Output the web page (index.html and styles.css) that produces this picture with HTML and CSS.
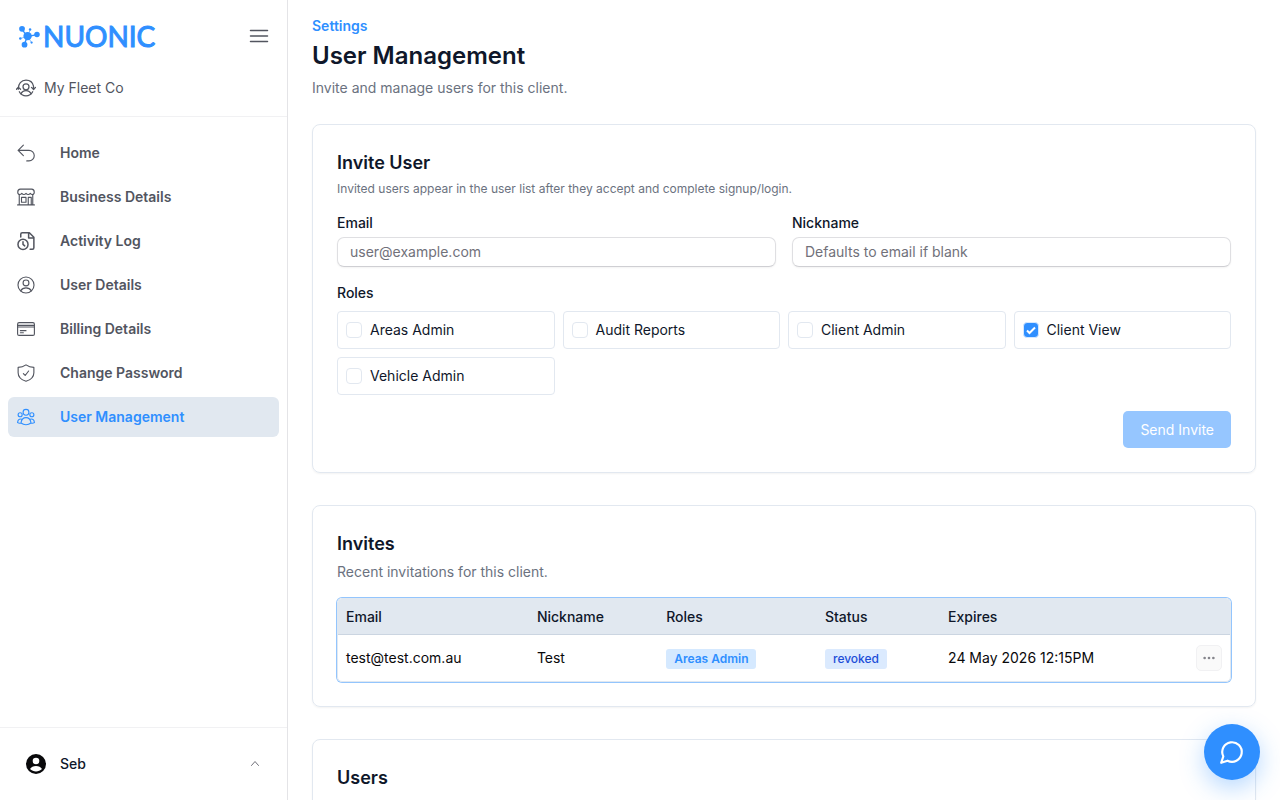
FILE: index.html
```html
<!DOCTYPE html>
<html lang="en">
<head>
    <meta charset="UTF-8">
    <meta name="viewport" content="width=device-width, initial-scale=1.0">
    <title>User Management</title>
    <link rel="stylesheet" href="styles.css">
</head>
<body>
    <aside class="sidebar">
        <div class="sidebar-header">
            <div class="brand-row">
                <a class="brand" href="#">
                    <svg class="brand-mark" viewBox="0 0 24 24" aria-hidden="true">
                        <path d="M4 4.500 10 12 20 10M10 12 6.500 20" fill="none" stroke="currentColor" stroke-width="1.400"/>
                        <path d="M10 12 12.500 5.500M10 12l4 6M10 12l-7.500 2" fill="none" stroke="currentColor" stroke-width=".6"/>
                        <circle cx="4.200" cy="4" r="3"/>
                        <circle cx="10" cy="11.600" r="4.400"/>
                        <circle cx="19.800" cy="10" r="2.900"/>
                        <circle cx="6.800" cy="20.500" r="3"/>
                        <circle cx="12.600" cy="4.600" r="1.300"/>
                        <circle cx="14.200" cy="18.300" r="1.200"/>
                        <circle cx="2.400" cy="14.200" r="1.300"/>
                    </svg>
                    <span>NUONIC</span>
                </a>
                <button class="icon-button" type="button" aria-label="Toggle menu">
                    <svg class="icon-menu" viewBox="0 0 20 20"><path d="M1.500 4.500h17M1.500 10h17M1.500 15.500h17"/></svg>
                </button>
            </div>
            <button class="client-switch" type="button">
                <svg class="icon" viewBox="0 0 24 24">
                    <circle cx="12" cy="10.500" r="3.600"/>
                    <path d="M6 19c1-2.700 3.200-4 6-4s5 1.300 6 4"/>
                    <path d="M2.800 13.500C2.400 7 6.500 2.600 12 2.600c4.500 0 8 2.600 9 7.200v3.700M.6 13.500l2.200-2.500 2.600 2.500M18.600 11.300l2.500 2.500 2.300-2.500M4 16.500c1.600 3 4.500 4.900 8 4.900s6.400-1.900 8-4.900"/>
                </svg>
                <span>My Fleet Co</span>
            </button>
        </div>

        <nav class="nav">
            <a class="nav-link" href="#">
                <svg class="icon" viewBox="0 0 24 24"><path d="M8.500 1.500 1.500 8.500l7 7M1.500 8.500H16a7 7 0 0 1 0 14h-3"/></svg>
                <span>Home</span>
            </a>
            <a class="nav-link" href="#">
                <svg class="icon" viewBox="0 0 24 24">
                    <path d="M4.500 1.500h15c1.800 0 3.500 1.800 3.500 4.200 0 1.800-1 3-2.600 3-1.200 0-2-.6-2.700-1.500-.7.900-1.600 1.500-2.800 1.500S12.700 8.100 12 7.200c-.7.900-1.600 1.500-2.800 1.500s-2.100-.6-2.800-1.500c-.7.900-1.500 1.500-2.700 1.500C2.100 8.700 1 7.500 1 5.700c0-2.400 1.700-4.200 3.500-4.200Z"/>
                    <path d="M3 9v13.500M21 9v13.500M.8 22.500h22.400M6 12.500h6v6.500H6zM15 22.500v-10h4v10"/>
                </svg>
                <span>Business Details</span>
            </a>
            <a class="nav-link" href="#">
                <svg class="icon icon-bold" viewBox="0 0 24 24">
                    <path d="M5 6.500V3c0-1.200.8-2 2-2h9.500L22.500 7v14c0 1.200-.8 2-2 2h-3M15.500 1.500V8H22"/>
                    <circle cx="8" cy="16.500" r="6.700"/>
                    <path d="M8 13v3.500l2.300 2"/>
                </svg>
                <span>Activity Log</span>
            </a>
            <a class="nav-link" href="#">
                <svg class="icon" viewBox="0 0 24 24">
                    <circle cx="12" cy="12" r="10.700"/>
                    <circle cx="12" cy="9.300" r="3.900"/>
                    <path d="M4.800 19.800c1.500-2.500 4.200-3.900 7.200-3.900s5.700 1.400 7.200 3.900"/>
                </svg>
                <span>User Details</span>
            </a>
            <a class="nav-link" href="#">
                <svg class="icon" viewBox="0 0 24 24">
                    <rect x=".8" y="3.500" width="22.400" height="17" rx="2"/>
                    <path d="M.8 7.200h22.400M.8 9.300h22.400M4.500 14.200H12M4.500 17h4"/>
                </svg>
                <span>Billing Details</span>
            </a>
            <a class="nav-link" href="#">
                <svg class="icon" viewBox="0 0 24 24"><path d="M12 1.200c3.200 2.300 6.600 3.300 10.500 3.300v7c0 5.800-4.500 9.500-10.500 11.500C6 21 1.500 17.300 1.500 11.500v-7c3.900 0 7.300-1 10.500-3.300ZM8.500 12.800l2.400 2.500 4.600-6"/></svg>
                <span>Change Password</span>
            </a>
            <a class="nav-link active" href="#" aria-current="page">
                <svg class="icon" viewBox="0 0 24 24">
                    <circle cx="12" cy="5.700" r="3.900"/>
                    <circle cx="4.200" cy="9" r="2.700"/>
                    <circle cx="19.800" cy="9" r="2.700"/>
                    <path d="M5.300 20c.6-4.700 3-7.200 6.700-7.200s6.100 2.500 6.700 7.200c-3.900 2.900-9.500 2.900-13.400 0ZM6.500 15C2.900 14 1 16 .8 19.500c1.300.8 2.700 1 4.500.5M17.500 15c3.600-1 5.500 1 5.700 4.500-1.300.8-2.700 1-4.500.5"/>
                </svg>
                <span>User Management</span>
            </a>
        </nav>

        <button class="account" type="button">
            <svg class="avatar" viewBox="0 0 20 20" aria-hidden="true">
                <circle cx="10" cy="10" r="10" fill="#09090b"/>
                <circle cx="10" cy="7" r="3.300" fill="#fff"/>
                <path d="M4 15c1.200-2 3.300-3 6-3s4.800 1 6 3c-3.300 3.300-8.700 3.300-12 0Z" fill="#fff"/>
            </svg>
            <span class="account-name">Seb</span>
            <svg class="chevron" viewBox="0 0 16 16" aria-hidden="true"><path d="m4.500 9.500 3.500-4 3.500 4"/></svg>
        </button>
    </aside>

    <main class="main">
        <header class="page-header">
            <a class="breadcrumb" href="#">Settings</a>
            <h1>User Management</h1>
            <p>Invite and manage users for this client.</p>
        </header>

        <section class="card">
            <h2>Invite User</h2>
            <p class="card-note">Invited users appear in the user list after they accept and complete signup/login.</p>
            <form class="invite-form">
                <div class="fields">
                    <div class="field">
                        <label for="email">Email</label>
                        <input class="text-input" type="email" id="email" placeholder="user@example.com">
                    </div>
                    <div class="field">
                        <label for="nickname">Nickname</label>
                        <input class="text-input" type="text" id="nickname" placeholder="Defaults to email if blank">
                    </div>
                </div>
                <fieldset class="roles">
                    <legend>Roles</legend>
                    <div class="role-grid">
                        <label class="role"><input type="checkbox"> Areas Admin</label>
                        <label class="role"><input type="checkbox"> Audit Reports</label>
                        <label class="role"><input type="checkbox"> Client Admin</label>
                        <label class="role"><input type="checkbox" checked> Client View</label>
                        <label class="role"><input type="checkbox"> Vehicle Admin</label>
                    </div>
                </fieldset>
                <button class="send-button" type="submit" disabled>Send Invite</button>
            </form>
        </section>

        <section class="card">
            <h2>Invites</h2>
            <p class="card-text">Recent invitations for this client.</p>
            <div class="table-wrap">
                <table>
                    <thead>
                        <tr>
                            <th class="col-email">Email</th>
                            <th class="col-nickname">Nickname</th>
                            <th class="col-roles">Roles</th>
                            <th class="col-status">Status</th>
                            <th>Expires</th>
                            <th class="col-actions"></th>
                        </tr>
                    </thead>
                    <tbody>
                        <tr>
                            <td>test@test.com.au</td>
                            <td>Test</td>
                            <td><span class="badge badge-role">Areas Admin</span></td>
                            <td><span class="badge badge-status">revoked</span></td>
                            <td>24 May 2026 12:15PM</td>
                            <td class="col-actions">
                                <button class="more-button" type="button" aria-label="Invite actions">
                                    <svg viewBox="0 0 16 16"><circle cx="3" cy="8" r="1.500"/><circle cx="8" cy="8" r="1.500"/><circle cx="13" cy="8" r="1.500"/></svg>
                                </button>
                            </td>
                        </tr>
                    </tbody>
                </table>
            </div>
        </section>

        <section class="card">
            <h2>Users</h2>
            <p class="card-text"></p>
        </section>
    </main>

    <button class="chat-button" type="button" aria-label="Open chat">
        <svg viewBox="0 0 24 24"><path d="M7.900 20A9 9 0 1 0 4 16.100L2 22Z"/></svg>
    </button>
</body>
</html>
```

FILE: styles.css
```css
* {
    box-sizing: border-box;
}

body {
    margin: 0;
    height: 100vh;
    display: flex;
    overflow: hidden;
    background: #fff;
    color: #0f172a;
    font-family: Inter, sans-serif;
    font-size: 14px;
    line-height: 20px;
}

h1, h2, p {
    margin: 0;
}

a {
    text-decoration: none;
}

button {
    border: none;
    background: none;
    padding: 0;
    font: inherit;
    color: inherit;
    cursor: pointer;
}

/* Sidebar */
.sidebar {
    width: 288px;
    flex-shrink: 0;
    display: flex;
    flex-direction: column;
    border-right: 1px solid #e4e4e7;
    color: #52555f;
}

.sidebar-header {
    display: flex;
    flex-direction: column;
    gap: 20px;
    padding: 16px;
    border-bottom: 1px solid #f1f1f3;
}

.brand-row {
    display: flex;
    align-items: center;
    justify-content: space-between;
    height: 40px;
}

.brand {
    display: flex;
    align-items: center;
    gap: 2px;
    padding-left: 2px;
    color: #2f8fff;
    font-family: Lato, sans-serif;
    font-size: 28px;
    line-height: 40px;
}

.brand span {
    -webkit-text-stroke: 1px currentColor;
}

.brand-mark {
    width: 23px;
    height: 23px;
    fill: currentColor;
}

.icon-button {
    display: flex;
    padding: 0 2px;
}

.icon,
.icon-menu,
.chevron {
    width: 20px;
    height: 20px;
    flex-shrink: 0;
    fill: none;
    stroke: currentColor;
    stroke-width: 1.5;
    stroke-linecap: round;
    stroke-linejoin: round;
}

.client-switch {
    display: flex;
    align-items: center;
    gap: 8px;
    height: 24px;
}

.nav {
    flex: 1;
    display: flex;
    flex-direction: column;
    gap: 4px;
    padding: 16px 8px;
}

.nav-link {
    display: flex;
    align-items: center;
    gap: 25px;
    height: 40px;
    padding: 0 9px;
    border-radius: 6px;
    color: #52555f;
    font-weight: 600;
}

.nav-link .icon {
    width: 18px;
    height: 18px;
}

.nav-link .icon-bold {
    stroke-width: 2;
    overflow: visible;
}

.nav-link.active {
    background: #e1e8f0;
    color: #2f8fff;
}

.account {
    display: flex;
    align-items: center;
    gap: 14px;
    height: 73px;
    padding: 0 24px 0 26px;
    border-top: 1px solid #f1f1f3;
    color: #0f172a;
    font-weight: 500;
    text-align: left;
}

.account-name {
    flex: 1;
}

.avatar {
    width: 20px;
    height: 20px;
}

.chevron {
    width: 16px;
    height: 16px;
    color: #71717a;
    stroke-width: 1;
}

/* Content */
.main {
    flex: 1;
    display: flex;
    flex-direction: column;
    gap: 32px;
    padding: 16px 24px;
    overflow-y: auto;
    scrollbar-width: none;
}

.page-header {
    display: flex;
    flex-direction: column;
    gap: 4px;
    margin-bottom: -6px;
}

.breadcrumb {
    color: #2f8fff;
    font-weight: 600;
}

h1 {
    margin-bottom: 2px;
    font-size: 24px;
    line-height: 32px;
    font-weight: 600;
}

.page-header p,
.card-text {
    color: #6b7280;
}

.card {
    flex-shrink: 0;
    padding: 24px;
    border: 1px solid #e2e8f0;
    border-radius: 8px;
    box-shadow: 0 1px 2px rgba(0, 0, 0, 0.05);
}

h2 {
    margin-bottom: 4px;
    font-size: 18px;
    line-height: 28px;
    font-weight: 600;
}

.card-note {
    margin-bottom: 16px;
    color: #6b7280;
    font-size: 12px;
    line-height: 16px;
}

.card-text {
    min-height: 20px;
    margin-bottom: 16px;
}

.invite-form {
    display: flex;
    flex-direction: column;
    gap: 16px;
}

.fields {
    display: grid;
    grid-template-columns: 1fr 1fr;
    gap: 16px;
}

.field {
    display: flex;
    flex-direction: column;
    gap: 4px;
}

.field label,
.roles legend {
    font-weight: 500;
}

.text-input {
    width: 100%;
    height: 30px;
    padding: 0 12px 1px;
    border: 1px solid #dfdfe2;
    border-bottom-color: #cfcfd3;
    border-radius: 7px;
    background: #fff;
    box-shadow: 0 1px 2px rgba(0, 0, 0, 0.05);
    color: inherit;
    font: inherit;
}

.text-input::placeholder {
    color: #71717a;
}

.roles {
    margin: 0;
    padding: 0;
    border: none;
    min-width: 0;
}

.roles legend {
    padding: 0;
    margin-bottom: 8px;
}

.role-grid {
    display: grid;
    grid-template-columns: repeat(4, 1fr);
    gap: 8px;
}

.role {
    display: flex;
    align-items: center;
    gap: 8px;
    height: 38px;
    padding: 0 8px;
    border: 1px solid #e2e8f0;
    border-radius: 4px;
}

.role input {
    appearance: none;
    width: 16px;
    height: 16px;
    margin: 0;
    border: 1px solid #e2e8f0;
    border-radius: 4px;
}

.role input:checked {
    border-color: #d5e8ff;
    background: #2f8fff url("data:image/svg+xml,%3Csvg xmlns='http://www.w3.org/2000/svg' viewBox='0 0 14 14' fill='none' stroke='white' stroke-width='2'%3E%3Cpath d='M3 7.500 5.500 10 11 4.500'/%3E%3C/svg%3E") center / 14px 14px no-repeat;
}

.send-button {
    align-self: flex-end;
    height: 37px;
    padding: 0 17px;
    border-radius: 5px;
    background: #2f8fff;
    color: #fff;
}

.send-button:disabled {
    opacity: 0.5;
    cursor: not-allowed;
}

.table-wrap {
    border: 1px solid #e1e8f0;
    border-radius: 5px;
    box-shadow: 0 0 0 1px #93c5fd;
    overflow: hidden;
}

table {
    width: 100%;
    table-layout: fixed;
    border-spacing: 0;
}

th,
td {
    padding: 0 8px;
    text-align: left;
    white-space: nowrap;
}

th {
    height: 36px;
    border-bottom: 1px solid #cbd5e1;
    background: #e1e8f0;
    font-weight: 500;
}

td {
    height: 46px;
    color: #09090b;
}

.col-email {
    width: 21.4%;
}

.col-nickname {
    width: 14.5%;
}

.col-roles {
    width: 17.8%;
}

.col-status {
    width: 13.8%;
}

.col-actions {
    width: 60px;
    text-align: right;
}

.badge {
    display: inline-block;
    padding: 2px 8px;
    border-radius: 3px;
    font-size: 12px;
    line-height: 16px;
    vertical-align: middle;
}

.badge-role {
    background: #d5e9ff;
    color: #2f8fff;
    font-weight: 600;
}

.badge-status {
    background: #dbeafe;
    color: #1d4ed8;
    font-weight: 500;
}

.more-button {
    display: inline-flex;
    align-items: center;
    justify-content: center;
    width: 26px;
    height: 26px;
    border: 1px solid #f1f1f3;
    border-radius: 5px;
    background: #fafafa;
    vertical-align: middle;
}

.more-button svg {
    width: 14px;
    height: 14px;
    fill: #85858c;
}

/* Floats over the page */
.chat-button {
    position: fixed;
    right: 20px;
    bottom: 20px;
    display: flex;
    align-items: center;
    justify-content: center;
    width: 56px;
    height: 56px;
    border-radius: 50%;
    background: #2f8fff;
    box-shadow: 0 8px 24px rgba(47, 143, 255, 0.35);
}

.chat-button svg {
    width: 26px;
    height: 26px;
    fill: none;
    stroke: #fff;
    stroke-width: 2;
    stroke-linecap: round;
    stroke-linejoin: round;
}
```
